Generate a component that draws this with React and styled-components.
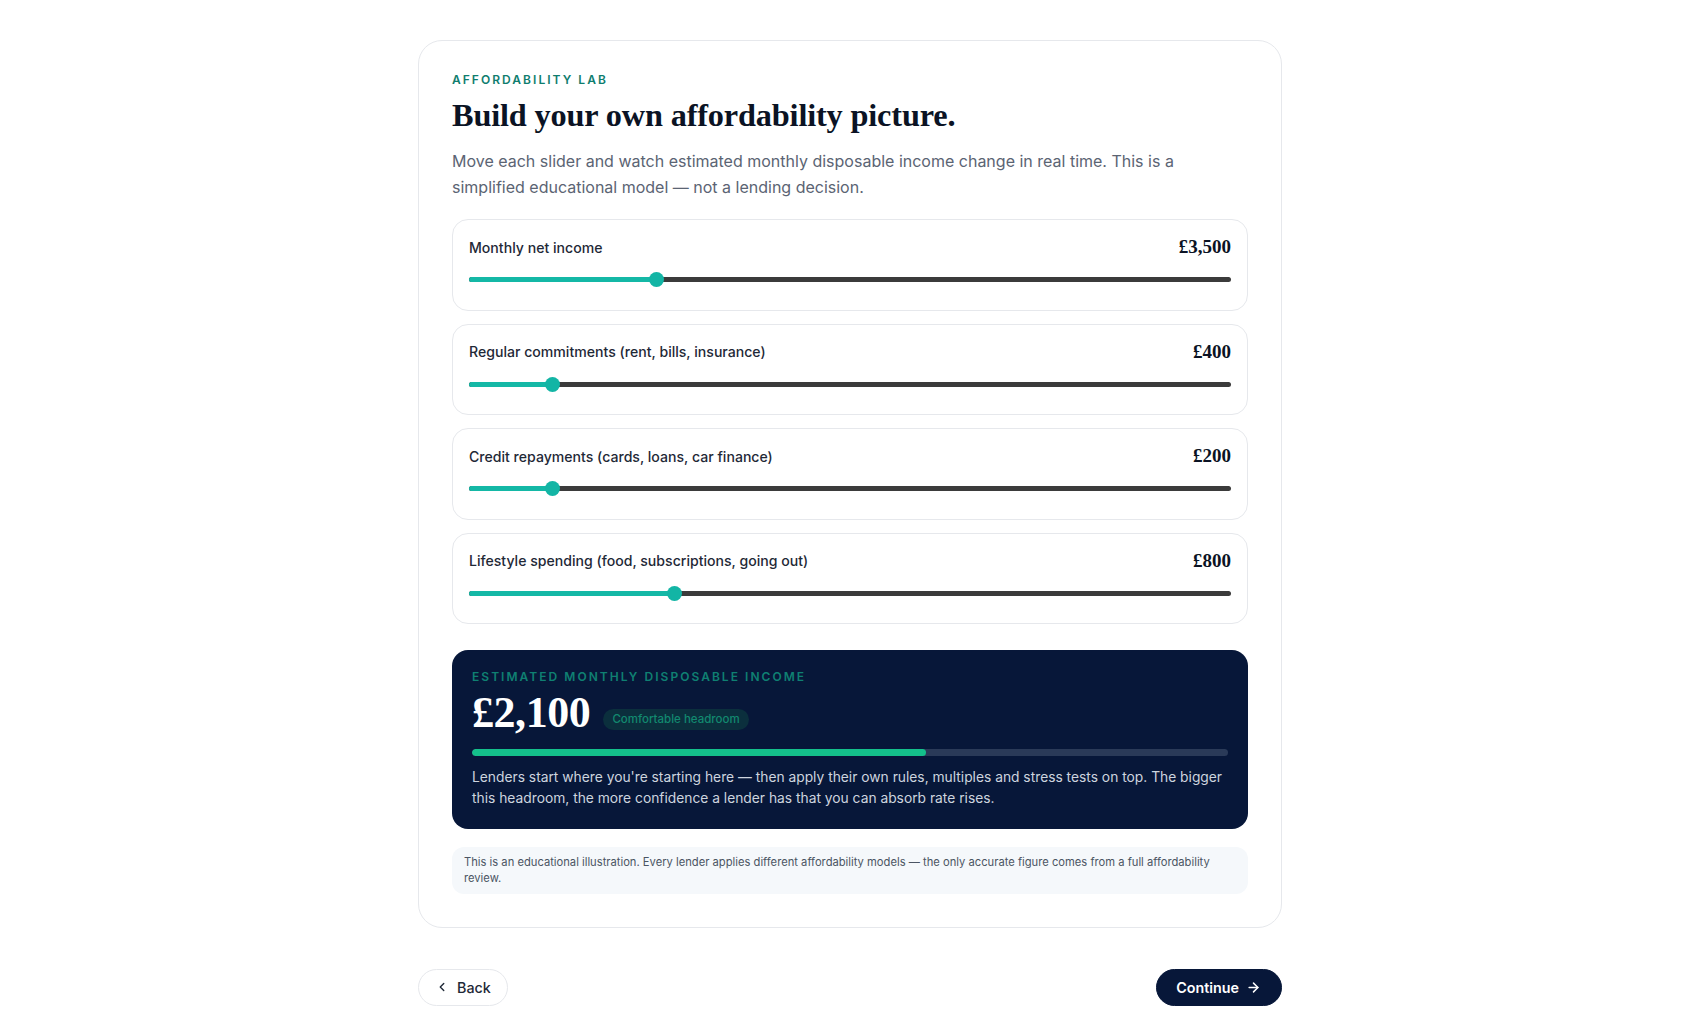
import React from "react";
import styled, { createGlobalStyle } from "styled-components";

const Global = createGlobalStyle`
  * { box-sizing: border-box; }
  html, body { margin: 0; padding: 0; background: #ffffff; }
  body { font-family: Inter, "Noto Sans", sans-serif; color: #0f172a; }
`;

const Page = styled.div`
  width: 864px;
  margin: 0 auto;
  padding: 40px 0 19px;
  display: flex;
  flex-direction: column;
  gap: 41px;
`;

const Card = styled.section`
  border: 1px solid #e6e8ec;
  border-radius: 24px;
  background: #fff;
  padding: 31px 33px 33px;
  display: flex;
  flex-direction: column;
`;

const Eyebrow = styled.div`
  font-size: 12px;
  font-weight: 600;
  letter-spacing: 0.17em;
  text-transform: uppercase;
  color: ${(p) => p.$color || "#0f7d6e"};
  line-height: 16px;
`;

const Title = styled.h1`
  margin: 7px 0 0;
  font-family: "Liberation Serif", "DejaVu Serif", serif;
  font-weight: 700;
  font-size: 32.3px;
  line-height: 40px;
  color: #0b1324;
  letter-spacing: -0.005em;
`;

const Lead = styled.p`
  margin: 13px 0 0;
  font-size: 16px;
  line-height: 26px;
  color: #5b6473;
  max-width: 740px;
`;

const Sliders = styled.div`
  margin-top: 19px;
  display: flex;
  flex-direction: column;
  gap: 13px;
`;

const SliderCard = styled.div`
  border: 1px solid #e6e8ec;
  border-radius: 16px;
  padding: 16px 16px 20px;
  height: 91.5px;
  display: flex;
  flex-direction: column;
  gap: 19px;
`;

const SliderHead = styled.div`
  display: flex;
  justify-content: space-between;
  align-items: center;
  height: 22px;
`;

const SliderLabel = styled.span`
  font-size: 14.1px;
  font-weight: 500;
  color: #1f2937;
`;

const SliderValue = styled.span`
  font-family: "Liberation Serif", "DejaVu Serif", serif;
  font-size: 19px;
  font-weight: 700;
  color: #0b1324;
`;

const Track = styled.div`
  position: relative;
  height: 5px;
  border-radius: 3px;
  background: #3b3b3b;
`;

const Fill = styled.div`
  position: absolute;
  left: 0;
  top: 0;
  bottom: 0;
  border-radius: 3px;
  background: #14b8a6;
`;

const Thumb = styled.div`
  position: absolute;
  top: 50%;
  width: 15px;
  height: 15px;
  margin-left: -7.5px;
  margin-top: -7.5px;
  border-radius: 50%;
  background: #13b5a5;
`;

const Result = styled.div`
  margin-top: 26px;
  background: #071739;
  border-radius: 16px;
  padding: 19px 20px 21px;
  display: flex;
  flex-direction: column;
`;

const FigureRow = styled.div`
  display: flex;
  align-items: center;
  gap: 13px;
  margin-top: 3px;
`;

const Figure = styled.span`
  font-family: "Liberation Serif", "DejaVu Serif", serif;
  font-size: 44px;
  font-weight: 700;
  line-height: 50px;
  color: #ffffff;
  letter-spacing: -0.01em;
`;

const Badge = styled.span`
  display: inline-flex;
  align-items: center;
  height: 21px;
  padding: 0 9px;
  border-radius: 999px;
  background: #0b2f3d;
  color: #12896f;
  font-size: 11.5px;
  font-weight: 500;
  margin-top: 12px;
`;

const Meter = styled.div`
  margin-top: 11px;
  height: 7px;
  border-radius: 4px;
  background: #2a3a58;
  overflow: hidden;
`;

const MeterFill = styled.div`
  height: 100%;
  border-radius: 4px;
  background: #14c08b;
`;

const ResultText = styled.p`
  margin: 11px 0 0;
  font-size: 13.8px;
  line-height: 20.5px;
  color: #cdd4df;
`;

const Note = styled.div`
  margin-top: 18px;
  background: #f5f8fb;
  border-radius: 12px;
  padding: 7px 12px 7px;
  font-size: 11.2px;
  line-height: 16.3px;
  color: #4b5563;
`;

const Nav = styled.div`
  display: flex;
  justify-content: space-between;
  align-items: center;
`;

const Button = styled.button`
  display: inline-flex;
  align-items: center;
  gap: ${(p) => (p.$primary ? "7px" : "8px")};
  height: 37px;
  border-radius: 999px;
  font-family: Inter, "Noto Sans", sans-serif;
  font-size: 14.3px;
  font-weight: ${(p) => (p.$primary ? 600 : 500)};
  cursor: pointer;
  padding: ${(p) => (p.$primary ? "0 20px 0 19px" : "0 16px 0 16px")};
  border: 1px solid ${(p) => (p.$primary ? "#071739" : "#e6e8ec")};
  background: ${(p) => (p.$primary ? "#071739" : "#ffffff")};
  color: ${(p) => (p.$primary ? "#ffffff" : "#1f2937")};
`;

const sliders = [
  { label: "Monthly net income", value: "£3,500", pct: 24.6 },
  { label: "Regular commitments (rent, bills, insurance)", value: "£400", pct: 10.9 },
  { label: "Credit repayments (cards, loans, car finance)", value: "£200", pct: 10.9 },
  { label: "Lifestyle spending (food, subscriptions, going out)", value: "£800", pct: 27 },
];

function Slider({ label, value, pct }) {
  return (
    <SliderCard>
      <SliderHead>
        <SliderLabel>{label}</SliderLabel>
        <SliderValue>{value}</SliderValue>
      </SliderHead>
      <Track>
        <Fill style={{ width: `${pct}%` }} />
        <Thumb style={{ left: `${pct}%` }} />
      </Track>
    </SliderCard>
  );
}

const ChevronLeft = () => (
  <svg width="14" height="14" viewBox="0 0 24 24" fill="none" stroke="currentColor" strokeWidth="2.4" strokeLinecap="round" strokeLinejoin="round">
    <path d="M15 18l-6-6 6-6" />
  </svg>
);

const ArrowRight = () => (
  <svg width="15" height="15" viewBox="0 0 24 24" fill="none" stroke="currentColor" strokeWidth="2.4" strokeLinecap="round" strokeLinejoin="round">
    <path d="M5 12h14" />
    <path d="M12 5l7 7-7 7" />
  </svg>
);

export default function App() {
  return (
    <>
      <Global />
      <Page>
        <Card>
          <Eyebrow>Affordability lab</Eyebrow>
          <Title>Build your own affordability picture.</Title>
          <Lead>
            Move each slider and watch estimated monthly disposable income change in real time. This is a
            simplified educational model — not a lending decision.
          </Lead>
          <Sliders>
            {sliders.map((s) => (
              <Slider key={s.label} {...s} />
            ))}
          </Sliders>
          <Result>
            <Eyebrow $color="#0f8072">Estimated monthly disposable income</Eyebrow>
            <FigureRow>
              <Figure>£2,100</Figure>
              <Badge>Comfortable headroom</Badge>
            </FigureRow>
            <Meter>
              <MeterFill style={{ width: "60%" }} />
            </Meter>
            <ResultText>
              Lenders start where you're starting here — then apply their own rules, multiples and stress tests on top.
              The bigger this headroom, the more confidence a lender has that you can absorb rate rises.
            </ResultText>
          </Result>
          <Note>
            This is an educational illustration. Every lender applies different affordability models — the only accurate
            figure comes from a full affordability review.
          </Note>
        </Card>
        <Nav>
          <Button>
            <ChevronLeft />
            Back
          </Button>
          <Button $primary>
            Continue
            <ArrowRight />
          </Button>
        </Nav>
      </Page>
    </>
  );
}
